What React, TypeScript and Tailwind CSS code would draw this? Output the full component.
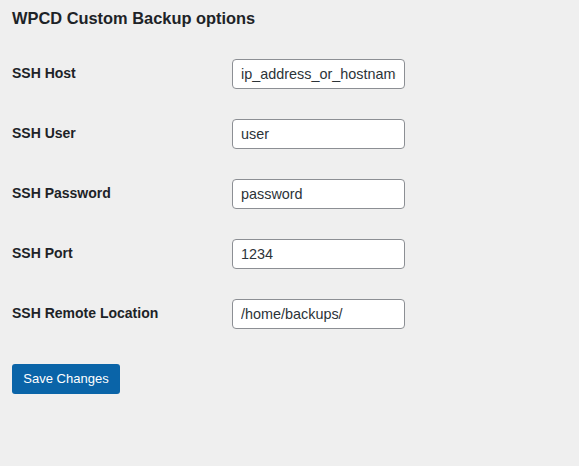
export default function App() {
  const rows = [
    { label: "SSH Host", value: "ip_address_or_hostname" },
    { label: "SSH User", value: "user" },
    { label: "SSH Password", value: "password" },
    { label: "SSH Port", value: "1234" },
    { label: "SSH Remote Location", value: "/home/backups/" },
  ];
  return (
    <div
      className="min-h-[466px] w-full bg-[#efefef] px-3 text-[#1d2327]"
      style={{ fontFamily: '"Liberation Sans", Arial, sans-serif' }}
    >
      <h2 className="pt-[7px] text-[16.4px] font-semibold leading-[22px]">WPCD Custom Backup options</h2>
      <div className="mt-[15px] flex flex-col">
        {rows.map((r) => (
          <div key={r.label} className="flex h-[60px]">
            <div className="w-[220px] pt-[20px] text-[14px] font-semibold leading-[18px]">{r.label}</div>
            <div className="pt-[15px]">
              <input
                readOnly
                value={r.value}
                className="h-[30px] w-[173px] rounded-[4px] border border-[#8c8f94] bg-white px-2 text-[14.4px] text-[#2c3338] outline-none"
                style={{ fontFamily: '"Liberation Sans", Arial, sans-serif' }}
              />
            </div>
          </div>
        ))}
      </div>
      <button className="mt-5 h-[30px] w-[108px] rounded-[3px] bg-[#0a64a8] text-[13px] text-white">
        Save Changes
      </button>
    </div>
  );
}
